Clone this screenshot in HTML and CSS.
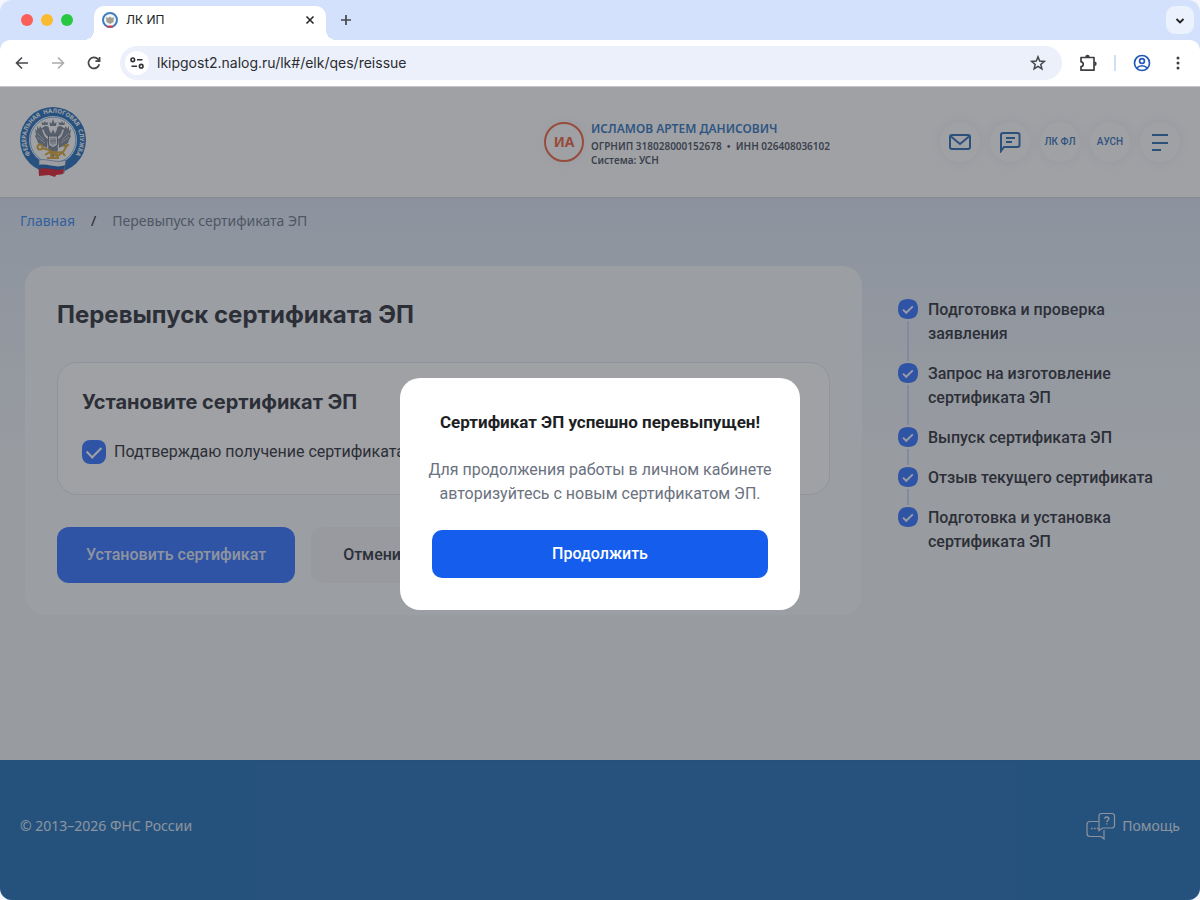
FILE: index.html
```html
<!DOCTYPE html>
<html lang="ru">
<head>
<meta charset="utf-8">
<meta name="viewport" content="width=device-width, initial-scale=1">
<title>ЛК ИП</title>
<link rel="stylesheet" href="styles.css">
</head>
<body>
<svg class="defs" aria-hidden="true">
  <symbol id="step-check" viewBox="0 0 20 20">
    <path d="M10 0C16.800 0 20 3.600 20 10s-3.200 10-10 10S0 16.400 0 10 3.200 0 10 0z" fill="#3775ff"/>
    <path d="M5 10.600l3.200 3.200 6.600-6.400" fill="none" stroke="#f0f4ff" stroke-width="2"/>
  </symbol>
</svg>
<div class="browser">
  <div class="tab-strip">
    <div class="lights"><span class="light light-red"></span><span class="light light-yellow"></span><span class="light light-green"></span></div>
    <div class="tab">
      <svg class="favicon" viewBox="0 0 16 16" aria-hidden="true">
        <circle cx="8" cy="8" r="7" fill="#f4f6f8" stroke="#3f7fc0" stroke-width="2"/>
        <path d="M4 5l2 1 2-1.500 2 1.500 2-1-.5 5L8 12l-3.500-2z" fill="#a39f90"/>
        <path d="M5 13h6v2.600H5z" fill="#d43b40"/><path d="M5 12.600h6v1H5z" fill="#fff"/>
      </svg>
      <span class="tab-title">ЛК ИП</span>
      <button class="icon-button" aria-label="Закрыть вкладку"><svg width="10" height="10" viewBox="0 0 10 10"><path d="M1.500 1.500l7 7m0-7l-7 7" stroke="#27282b" stroke-width="1.600"/></svg></button>
    </div>
    <button class="icon-button new-tab" aria-label="Новая вкладка"><svg width="12" height="12" viewBox="0 0 12 12"><path d="M6 1v10M1 6h10" stroke="#44464b" stroke-width="1.700"/></svg></button>
    <button class="tab-search" aria-label="Поиск вкладок"><svg width="10" height="8" viewBox="0 0 10 8"><path d="M1.500 2L5 5.500 8.500 2" fill="none" stroke="#222" stroke-width="1.800"/></svg></button>
  </div>
  <div class="toolbar">
    <button class="icon-button" aria-label="Назад"><svg width="16" height="16" viewBox="0 0 16 16" fill="none" stroke="#45474b" stroke-width="1.600"><path d="M14 8H3M8 2.500L2.500 8 8 13.500"/></svg></button>
    <button class="icon-button" aria-label="Вперёд"><svg width="16" height="16" viewBox="0 0 16 16" fill="none" stroke="#aaacae" stroke-width="1.600"><path d="M2 8h11M8 2.500L13.500 8 8 13.500"/></svg></button>
    <button class="icon-button" aria-label="Обновить"><svg width="16" height="16" viewBox="0 0 16 16" fill="none" stroke="#45474b" stroke-width="1.700"><path d="M13.300 9.200A5.500 5.500 0 1 1 12 4.200L13.300 5.600M13.600 2v4.200H9.400"/></svg></button>
    <div class="address">
      <button class="site-info" aria-label="Сведения о сайте"><svg width="14" height="12" viewBox="0 0 14 12" fill="none" stroke="#303236" stroke-width="1.600"><circle cx="2.800" cy="2.800" r="1.800"/><path d="M7 2.800h5.500M1.500 9.200H7"/><circle cx="11.200" cy="9.200" r="1.800"/></svg></button>
      <input class="url" type="text" aria-label="Адрес" value="lkipgost2.nalog.ru/lk#/elk/qes/reissue">
      <button class="icon-button" aria-label="В закладки"><svg width="16" height="16" viewBox="0 0 16 16" fill="none" stroke="#45474b" stroke-width="1.500"><path d="M8 1.800l1.700 4.300 4.600.300-3.500 3 1.100 4.500L8 11.400l-3.900 2.500 1.100-4.500-3.500-3 4.600-.300z"/></svg></button>
    </div>
    <button class="icon-button" aria-label="Расширения"><svg width="18" height="18" viewBox="0 0 18 18"><path d="M2 3.500h13v12.700H2v-3.700c3-.300 3-4.400 0-4.700z" fill="none" stroke="#3d3f43" stroke-width="1.700" stroke-linejoin="round"/><path d="M6.300 3a2.200 2.200 0 0 1 4.400 0zM15.500 7.600a2.200 2.200 0 0 1 0 4.400z" fill="#3d3f43"/></svg></button>
    <span class="toolbar-divider"></span>
    <button class="icon-button" aria-label="Профиль"><svg width="18" height="18" viewBox="0 0 18 18" fill="none" stroke="#2359b8" stroke-width="1.700"><circle cx="9" cy="9" r="7.500"/><circle cx="9" cy="7" r="2.400"/><path d="M3.800 14c2.600-3 7.800-3 10.400 0"/></svg></button>
    <button class="icon-button" aria-label="Меню браузера"><svg width="4" height="16" viewBox="0 0 4 16" fill="#3d3f43"><circle cx="2" cy="3" r="1.500"/><circle cx="2" cy="8" r="1.500"/><circle cx="2" cy="13" r="1.500"/></svg></button>
  </div>

  <div class="page">
    <header class="header">
      <a class="logo" href="#" aria-label="Федеральная налоговая служба">
        <svg width="66" height="70" viewBox="0 0 66 70">
          <defs><path id="ring-path" d="M15.500 53.500A27 27 0 1 1 50.500 53.500"/></defs>
          <circle cx="33" cy="33" r="33" fill="#2873bd"/>
          <circle cx="33" cy="33" r="24" fill="#fff"/>
          <circle cx="33" cy="33" r="22.800" fill="none" stroke="#6aa3da" stroke-width=".8"/>
          <text class="ring-text"><textPath href="#ring-path" startOffset="50%" text-anchor="middle">ФЕДЕРАЛЬНАЯ  НАЛОГОВАЯ  СЛУЖБА</textPath></text>
          <g fill="#7d8a99">
            <path d="M29 30c-3-1-5-4-5-7l-3-1 3-2.500c3-1.500 5.500.500 5 3l2 4 2-4 2 4 2-4c-.5-2.500 2-4.500 5-3l3 2.500-3 1c0 3-2 6-5 7l1 13-5 8-5-8z"/>
            <path d="M28 32c-3-1-5-5-6-10l-2-3-1 3-2-3v5l-2-2 1 6-1 1 2 4 1 3 3 2 6 3zM38 32c3-1 5-5 6-10l2-3 1 3 2-3v5l2-2-1 6 1 1-2 4-1 3-3 2-6 3z"/>
            <path d="M30 19l-.5-4 2 1.500L33 12l1.500 4.500 2-1.500-.5 4z"/>
            <path d="M22 18l-.5-3 2 1 1.500-2 1 2 2-1-.5 3zM39 18l-.5-3 2 1 1.500-2 1 2 2-1-.5 3z"/>
          </g>
          <path d="M17 26l7 7m-7-3l8 6m24-10l-7 7m7-3l-8 6" stroke="#d3d9df" stroke-width=".8"/>
          <path d="M28.500 29h9v9L33 41l-4.500-3z" fill="#e8ecef" stroke="#687787"/>
          <path d="M31 31v6m2-6v7m2-7v6M30 34h6" stroke="#778493" stroke-width=".8"/>
          <g fill="none" stroke="#d9a93c" stroke-width="2">
            <circle cx="20" cy="40" r="2.500"/><path d="M22 41l7 2 4 3 10-1 5-8M25 48l5-3 8 4 5-4M27 51h12M43 39l6-1M43 46l2 3"/><circle cx="34" cy="48" r="3"/>
          </g>
          <path d="M19 53c9-2 17 4 27 0l-2 13c-9 3-16-2-25 1z" fill="#f7f8fa" stroke="#5579a7" stroke-width=".6"/>
          <path d="M19 58c9-2 17 4 26 0l-.7 4c-9 4-17-2-25.300 1z" fill="#2464b4"/>
          <path d="M19 62c9-3 17 3 25.400 0L43 67l-7 1-1 2-6-2-10 1z" fill="#df2230"/>
        </svg>
      </a>
      <div class="user">
        <span class="avatar">ИА</span>
        <div>
          <a class="user-name" href="#">ИСЛАМОВ АРТЕМ ДАНИСОВИЧ</a>
          <p class="user-meta">ОГРНИП 318028000152678 &nbsp;•&nbsp; ИНН 026408036102</p>
          <p class="user-meta">Система: УСН</p>
        </div>
      </div>
      <nav class="actions" aria-label="Разделы кабинета">
        <button class="round" aria-label="Сообщения"><svg width="22" height="18" viewBox="0 0 22 18"><rect x="1" y="2" width="20" height="14" rx="2"/><path d="M2 3.500l9 7.500 9-7.500"/></svg></button>
        <button class="round" aria-label="Чат"><svg width="22" height="22" viewBox="0 0 22 22"><path d="M2 20V4a2 2 0 0 1 2-2h14.500a2 2 0 0 1 2 2v10a2 2 0 0 1-2 2H5z"/><path d="M7 7h9M7 11h6"/></svg></button>
        <button class="round">ЛК ФЛ</button>
        <button class="round">АУСН</button>
        <button class="round" aria-label="Меню"><svg width="18" height="18" viewBox="0 0 18 18"><path d="M1 2h16M1 10h16M1 17h9"/></svg></button>
      </nav>
    </header>

    <nav class="crumbs" aria-label="Навигация"><a href="#">Главная</a><span class="slash">/</span><span>Перевыпуск сертификата ЭП</span></nav>

    <main class="content">
      <section class="card">
        <h1 class="card-title">Перевыпуск сертификата ЭП</h1>
        <div class="panel">
          <h2 class="panel-title">Установите сертификат ЭП</h2>
          <label class="confirm" for="confirm"><input class="checkbox" id="confirm" type="checkbox" checked>Подтверждаю получение сертификата</label>
        </div>
        <div class="buttons"><button class="button button-main">Установить сертификат</button><button class="button button-quiet">Отменить</button></div>
      </section>
      <ol class="steps">
        <li class="step"><span class="marker"><svg class="marker-icon"><use href="#step-check"/></svg></span><span class="step-text">Подготовка и проверка заявления</span></li>
        <li class="step"><span class="marker"><svg class="marker-icon"><use href="#step-check"/></svg></span><span class="step-text">Запрос на изготовление сертификата ЭП</span></li>
        <li class="step"><span class="marker"><svg class="marker-icon"><use href="#step-check"/></svg></span><span class="step-text">Выпуск сертификата ЭП</span></li>
        <li class="step"><span class="marker"><svg class="marker-icon"><use href="#step-check"/></svg></span><span class="step-text">Отзыв текущего сертификата</span></li>
        <li class="step"><span class="marker"><svg class="marker-icon"><use href="#step-check"/></svg></span><span class="step-text">Подготовка и установка сертификата ЭП</span></li>
      </ol>
    </main>

    <footer class="footer">
      <span>© 2013–2026 ФНС России</span>
      <a class="help" href="#">
        <svg width="30" height="28" viewBox="0 0 30 28" fill="none" stroke="currentColor" stroke-width="1.200"><path d="M12.500 9.500H4a3 3 0 0 0-3 3v9a3 3 0 0 0 3 3h11l3 2.500v-9"/><path d="M15.500 1.500H26a2.500 2.500 0 0 1 2.500 2.500v9.500A2.500 2.500 0 0 1 26 16h-9.500l-3.500 2.500V4a2.500 2.500 0 0 1 2.500-2.500z"/><path d="M5 16.500h1.600M8 16.500h1.600M11 16.500h1.600" stroke-width="1.600"/><path d="M18.800 6.700c0-2.200 4-2.200 4 0 0 1.500-2 1.500-2 3.300m0 1.200v1.400" stroke-width="1.400"/></svg>
        Помощь
      </a>
    </footer>

    <div class="overlay">
      <div class="modal" role="dialog" aria-modal="true" aria-labelledby="modal-title">
        <h2 class="modal-title" id="modal-title">Сертификат ЭП успешно перевыпущен!</h2>
        <p class="modal-text">Для продолжения работы в личном кабинете авторизуйтесь с новым сертификатом ЭП.</p>
        <button class="modal-button">Продолжить</button>
      </div>
    </div>
  </div>
</div>
</body>
</html>
```
FILE: styles.css
```css
* { box-sizing: border-box; }
body {
  margin: 0;
  background: #f4f6fb;
  font-family: Roboto, "Noto Sans", sans-serif;
  font-size: 16px;
  line-height: 24px;
  color: #30343c;
}
h1, h2, p, ol { margin: 0; padding: 0; }
button, input { font: inherit; }
button { border: 0; padding: 0; cursor: pointer; }
a { text-decoration: none; }
.defs { display: none; }

/* Browser window */
.browser {
  display: flex;
  flex-direction: column;
  min-height: 100vh;
  border-radius: 12px;
  overflow: hidden;
  background: #d3e1fc;
}
.tab-strip { display: flex; height: 40px; padding: 6px 6px 0 21px; }
.lights { display: flex; gap: 8px; padding-top: 8px; width: 73px; }
.light { width: 12px; height: 12px; border-radius: 50%; }
.light-red { background: #fb5d57; }
.light-yellow { background: #fbbb2e; }
.light-green { background: #28c840; }
.tab {
  position: relative;
  display: flex;
  align-items: center;
  gap: 8px;
  width: 232px;
  height: 34px;
  padding: 0 8px 6px;
  border-radius: 10px 10px 0 0;
  background: #fff;
}
.tab::before, .tab::after {
  content: "";
  position: absolute;
  bottom: 0;
  width: 10px;
  height: 10px;
}
.tab::before { right: 100%; background: radial-gradient(circle at 0 0, transparent 10px, #fff 10px); }
.tab::after { left: 100%; background: radial-gradient(circle at 100% 0, transparent 10px, #fff 10px); }
.favicon { width: 16px; height: 16px; }
.tab-title { flex: 1; font: 12px/16px Inter, sans-serif; color: #222326; }
.icon-button {
  display: flex;
  align-items: center;
  justify-content: center;
  width: 16px;
  height: 24px;
  background: none;
}
.icon-button svg { flex-shrink: 0; }
.new-tab { margin: 2px 0 0 12px; }
.tab-search {
  width: 28px;
  height: 28px;
  margin-left: auto;
  border-radius: 9px;
  background: #ebf1fd;
}
.toolbar {
  display: flex;
  align-items: center;
  gap: 20px;
  height: 47px;
  padding: 0 14px;
  border-bottom: 1px solid #c3c6cc;
  border-radius: 10px 10px 0 0;
  background: #fff;
}
.address {
  display: flex;
  flex: 1;
  align-items: center;
  gap: 8px;
  height: 34px;
  margin: 0 -2px;
  padding: 0 16px 0 5px;
  border-radius: 17px;
  background: #ebf0fb;
}
.site-info {
  display: flex;
  align-items: center;
  justify-content: center;
  width: 24px;
  height: 24px;
  border-radius: 50%;
  background: #fff;
}
.url { flex: 1; min-width: 0; padding: 0; border: 0; background: none; font: 14px/20px Inter, sans-serif; color: #2b2d31; }
.toolbar-divider { width: 2px; height: 16px; margin: 0 -2px; background: #cfdff8; }

/* Account page */
.page {
  position: relative;
  display: flex;
  flex: 1;
  flex-direction: column;
  background: linear-gradient(#dce7f5 110px, #f0f4f6 360px);
}
.header {
  display: flex;
  align-items: center;
  height: 110px;
  padding: 0 20px;
  background: #fff;
  box-shadow: 0 1px 2px #c9d2e0;
}
.logo { display: flex; }
.ring-text { font: bold 6px "Noto Sans", sans-serif; fill: #fff; white-space: pre; }
.user {
  display: flex;
  align-items: center;
  gap: 7px;
  margin: 0 110px 0 auto;
  font-family: "Noto Sans", sans-serif;
  font-weight: 600;
}
.avatar {
  display: flex;
  align-items: center;
  justify-content: center;
  width: 40px;
  height: 40px;
  border: 2px solid #ef6744;
  border-radius: 50%;
  font-size: 14px;
  font-weight: 700;
  color: #ef6744;
  box-shadow: 0 0 12px #f0f2f4;
}
.user-name { display: block; font-size: 12px; line-height: 21px; color: #3679c0; }
.user-meta { font-size: 10px; line-height: 14px; color: #4b5563; }
.actions { display: flex; gap: 10px; }
.round {
  display: flex;
  align-items: center;
  justify-content: center;
  width: 40px;
  height: 40px;
  border-radius: 50%;
  background: #fff;
  box-shadow: 0 0 12px #ecedf0;
  font-size: 10px;
  font-weight: 500;
  white-space: nowrap;
  color: #3675b8;
}
.round svg { fill: none; stroke: #2f70b5; stroke-width: 2; }
.crumbs {
  display: flex;
  gap: 16px;
  padding: 12px 20px 33px;
  font-family: "Noto Sans", sans-serif;
  font-size: 14px;
  color: #6f7a8d;
}
.crumbs a { color: #3d8bf0; }
.slash { color: #222; }
.content {
  display: grid;
  flex: 1;
  grid-template-columns: minmax(0, 1fr) 277px;
  gap: 36px;
  align-items: start;
  padding: 0 25px 40px;
}
.card { padding: 33px 32px 32px; border-radius: 20px; background: #f6f9fa; }
.card-title { font: 700 24px/32px Inter, sans-serif; }
.panel {
  margin: 31px 0 32px;
  padding: 25px 24px 30px;
  border: 1px solid #e4e8ec;
  border-radius: 20px;
  background: #fff;
}
.panel-title { margin-bottom: 24px; font: 700 20px/28px Inter, sans-serif; }
.confirm { display: flex; align-items: center; gap: 8px; }
.checkbox {
  display: grid;
  place-items: center;
  width: 24px;
  height: 24px;
  margin: 0;
  appearance: none;
  border-radius: 8px;
  background: #3775ff;
}
.checkbox:checked::before {
  content: "";
  width: 12px;
  height: 7px;
  border: solid #fff;
  border-width: 0 0 2px 2px;
  transform: translateY(-2px) rotate(-45deg);
}
.buttons { display: flex; gap: 16px; }
.button { height: 56px; border-radius: 12px; font-weight: 500; }
.button-main { padding: 0 29px; background: #3775ff; color: #dfe7f5; }
.button-quiet { padding: 0 32px; background: #f0f3f5; color: #30343c; }
.steps { padding-top: 32px; list-style: none; }
.step { display: flex; gap: 10px; }
.marker { display: flex; flex-direction: column; align-items: center; padding-top: 1px; }
.marker-icon { width: 20px; height: 20px; }
.step:not(:last-child) .marker::after { content: ""; flex: 1; width: 2px; margin: 2px 0 1px; background: #c8d6f5; }
.step-text { flex: 1; font-weight: 500; }
.step:not(:last-child) .step-text { padding-bottom: 16px; }
.footer {
  display: flex;
  align-items: center;
  justify-content: space-between;
  height: 140px;
  padding: 0 20px 8px;
  background: #2571b8;
  font-family: "Noto Sans", sans-serif;
  font-size: 14px;
  color: #dbe7f4;
}
.help { display: flex; align-items: center; gap: 6px; color: inherit; }
.overlay {
  position: absolute;
  inset: 0;
  display: flex;
  align-items: center;
  justify-content: center;
  background: rgba(39, 42, 50, .44);
}
.modal { width: 400px; padding: 32px; border-radius: 20px; background: #fff; text-align: center; }
.modal-title { font-size: 17px; font-weight: 700; line-height: 24px; color: #1d1f24; }
.modal-text { margin: 24px -8px; color: #6b7280; }
.modal-button { width: 100%; height: 48px; border-radius: 10px; background: #155dec; font-weight: 500; color: #fff; }
```
